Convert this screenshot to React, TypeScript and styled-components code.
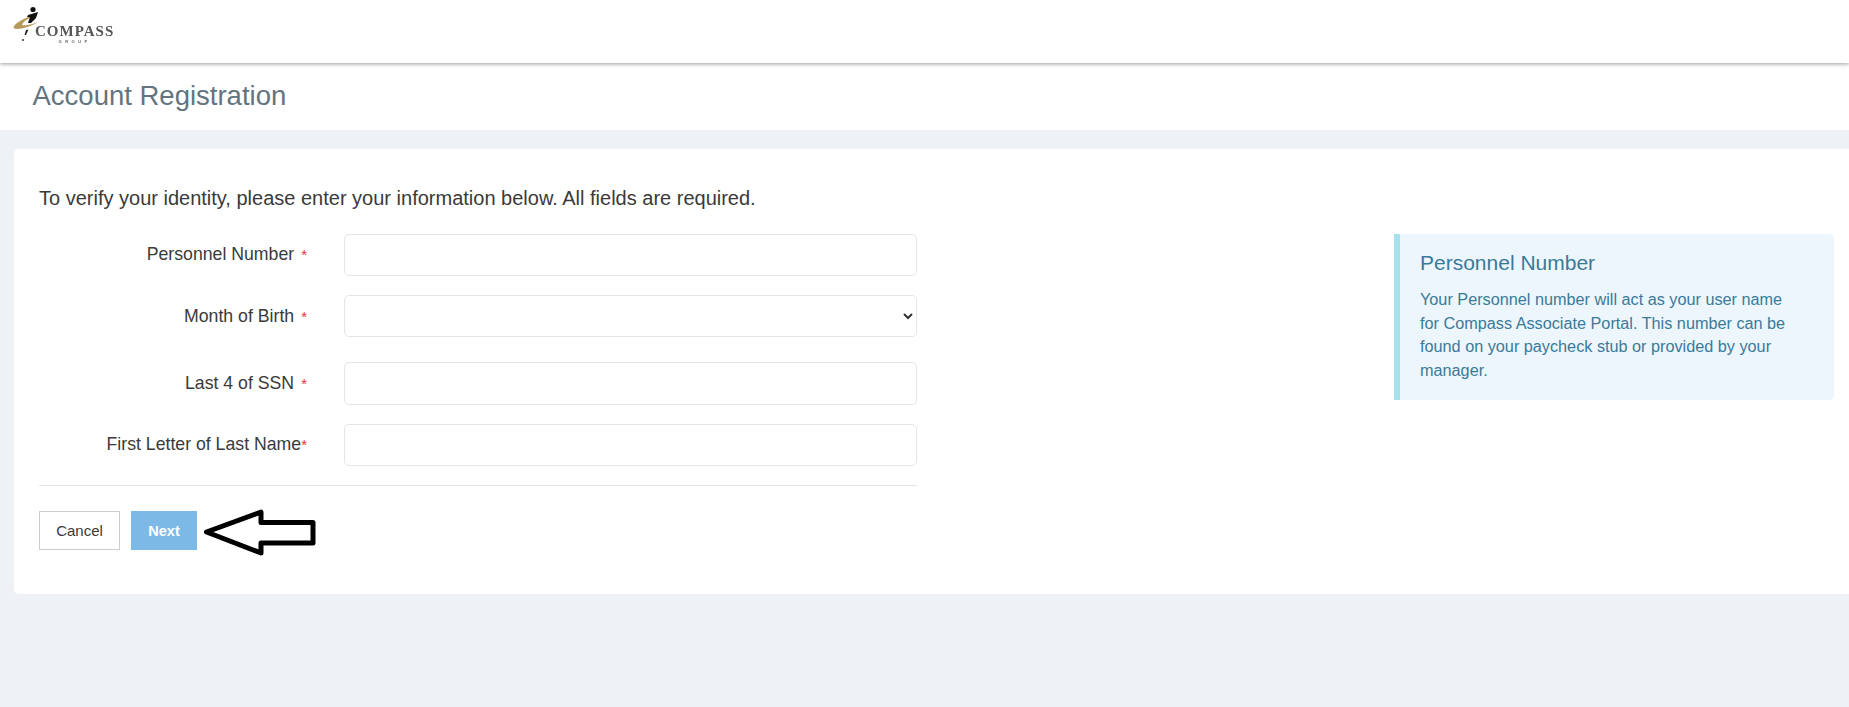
import styled, { createGlobalStyle } from "styled-components";

const GlobalStyle = createGlobalStyle`
  html, body {
    margin: 0;
    padding: 0;
    height: 100%;
    background: #eef1f6;
    font-family: "Liberation Sans", Arial, sans-serif;
    color: #333;
  }
`;

const fields = [
  { label: "Personnel Number", gap: 0, height: 42, spaced: true, lift: 2 },
  { label: "Month of Birth", gap: 19, height: 42, spaced: true, lift: 0, select: true },
  { label: "Last 4 of SSN", gap: 25, height: 43, spaced: true, lift: 0 },
  { label: "First Letter of Last Name", gap: 19, height: 42, spaced: false, lift: 2 },
];

export default function App() {
  return (
    <>
      <GlobalStyle />
      <Header>
        <Logo>
          <LogoMark width="48" height="44" viewBox="0 0 48 44">
            <path d="M14 26c5-6 15-10 23-11-6 2-14 6-15 10 4 1 11-1 16-3-6 4-15 7-21 7-3 0-4-1-3-3z" fill="#b59a5a" />
            <circle cx="33" cy="9.5" r="2.6" fill="#111" />
            <path d="M28 15l10-3-2 6-5 5-3 0 2-6-3 0z" fill="#111" />
            <path d="M26 30l2.500-.5-2.500 5.500-1.500 0z" fill="#222" />
            <circle cx="23" cy="40" r="1" fill="#333" />
          </LogoMark>
          <LogoWords>
            <LogoName>COMPASS</LogoName>
            <LogoGroup>GROUP</LogoGroup>
          </LogoWords>
        </Logo>
      </Header>
      <TitleBar>
        <Title>Account Registration</Title>
      </TitleBar>
      <Main>
        <Card>
          <Intro>To verify your identity, please enter your information below. All fields are required.</Intro>
          <Columns>
            <Form>
              {fields.map((f) => (
                <Row key={f.label} $gap={f.gap}>
                  <Label $lift={f.lift}>
                    {f.label}
                    <Required $spaced={f.spaced}>*</Required>
                  </Label>
                  {f.select ? (
                    <SelectBox $height={f.height}>
                      <option></option>
                    </SelectBox>
                  ) : (
                    <TextBox $height={f.height} />
                  )}
                </Row>
              ))}
              <Divider />
              <Actions>
                <CancelButton>Cancel</CancelButton>
                <NextButton>Next</NextButton>
                <Arrow width="114" height="48" viewBox="0 0 114 48">
                  <path
                    d="M3.500 24L58 4V14.500H110V35H58V45Z"
                    fill="#fff"
                    stroke="#000"
                    strokeWidth="5"
                    strokeLinejoin="round"
                  />
                </Arrow>
              </Actions>
            </Form>
            <Aside>
              <AsideTitle>Personnel Number</AsideTitle>
              <AsideText>
                Your Personnel number will act as your user name for Compass Associate Portal. This number can be found
                on your paycheck stub or provided by your manager.
              </AsideText>
            </Aside>
          </Columns>
        </Card>
      </Main>
    </>
  );
}

const Header = styled.header`
  height: 63px;
  background: #fff;
  box-shadow: 0 1px 4px rgba(0, 0, 0, 0.4);
  position: relative;
`;

const Logo = styled.div`
  display: flex;
  width: 120px;
  height: 50px;
  filter: blur(0.4px);
`;

const LogoMark = styled.svg`
  flex: none;
  margin-right: -13px;
`;

const LogoWords = styled.div`
  display: flex;
  flex-direction: column;
  align-items: center;
  padding-top: 25px;
`;

const LogoName = styled.div`
  font-family: "Liberation Serif", serif;
  font-weight: 700;
  font-size: 15px;
  line-height: 13px;
  letter-spacing: 1px;
  color: #555;
`;

const LogoGroup = styled.div`
  font-family: "Liberation Sans", sans-serif;
  font-weight: 700;
  font-size: 4px;
  line-height: 7px;
  letter-spacing: 3.500px;
  color: #666;
`;

const TitleBar = styled.div`
  height: 67px;
  background: #fff;
  display: flex;
  align-items: center;
  padding-left: 32.500px;
`;

const Title = styled.h1`
  margin: 0 0 2px;
  font-size: 27.500px;
  font-weight: 400;
  color: #64747f;
`;

const Main = styled.main`
  padding: 19px 0 0 14px;
`;

const Card = styled.section`
  height: 445px;
  box-sizing: border-box;
  background: #fff;
  border-radius: 5px 0 0 5px;
  padding: 36px 15px 0 25px;
`;

const Intro = styled.p`
  margin: 0 0 23px;
  font-size: 20px;
  line-height: 26px;
  color: #3a3a3a;
`;

const Columns = styled.div`
  display: flex;
  justify-content: space-between;
  align-items: flex-start;
`;

const Form = styled.form`
  width: 878px;
`;

const Row = styled.div<{ $gap: number }>`
  display: flex;
  align-items: center;
  margin-top: ${(p) => p.$gap}px;
`;

const Label = styled.label<{ $lift: number }>`
  width: 268px;
  flex: none;
  margin-right: 37px;
  padding-bottom: ${(p) => p.$lift}px;
  text-align: right;
  font-size: 17.700px;
  color: #3a3a3a;
`;

const Required = styled.span<{ $spaced: boolean }>`
  color: #e33;
  font-size: 15px;
  margin-left: ${(p) => (p.$spaced ? 7 : 0)}px;
`;

const TextBox = styled.input<{ $height: number }>`
  flex: 1;
  box-sizing: border-box;
  height: ${(p) => p.$height}px;
  border: 1px solid #e3e5e8;
  border-radius: 5px;
  background: #fff;
  outline: none;
`;

const SelectBox = styled.select<{ $height: number }>`
  flex: 1;
  box-sizing: border-box;
  height: ${(p) => p.$height}px;
  border: 1px solid #e3e5e8;
  border-radius: 5px;
  background: #fff;
  color: #333;
  outline: none;
`;

const Divider = styled.hr`
  margin: 19px 0 25px;
  border: 0;
  border-top: 1px solid #e3e5e8;
`;

const Actions = styled.div`
  display: flex;
  align-items: center;
  position: relative;
`;

const CancelButton = styled.button`
  width: 81px;
  height: 39px;
  box-sizing: border-box;
  border: 1px solid #ccc;
  background: #fff;
  color: #3a3a3a;
  font-family: inherit;
  font-size: 15px;
  margin-right: 11px;
`;

const NextButton = styled.button`
  width: 66px;
  height: 39px;
  border: 0;
  background: #7db9e6;
  color: #fff;
  font-family: inherit;
  font-size: 14.500px;
  font-weight: 700;
`;

const Arrow = styled.svg`
  position: absolute;
  left: 164px;
  top: -3px;
`;

const Aside = styled.aside`
  width: 440px;
  height: 166px;
  box-sizing: border-box;
  background: #edf6fc;
  border-left: 6px solid #a6e1ec;
  border-radius: 0 5px 5px 0;
  padding: 17px 40px 0 20px;
  color: #3a7a9a;
`;

const AsideTitle = styled.h4`
  margin: 0 0 13px;
  font-size: 21px;
  line-height: 24px;
  font-weight: 400;
`;

const AsideText = styled.p`
  margin: 0;
  font-size: 16.240px;
  line-height: 23.500px;
`;
